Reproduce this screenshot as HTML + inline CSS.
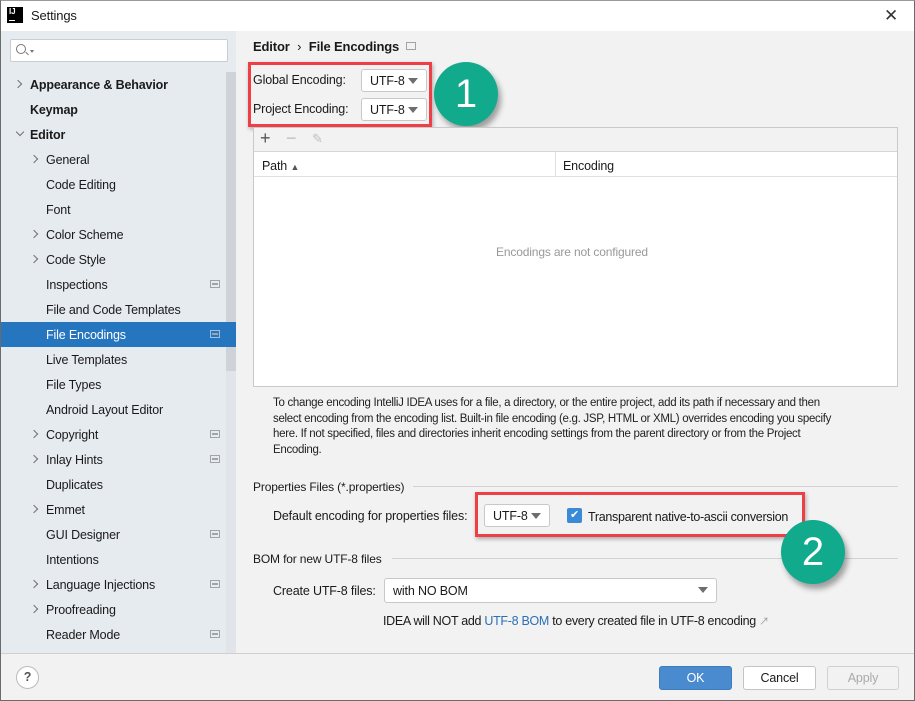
<!DOCTYPE html><html><head><style>
*{margin:0;padding:0;box-sizing:border-box}
body{width:915px;height:701px;overflow:hidden;background:#f2f2f2;font-family:"Liberation Sans","Noto Sans CJK KR",sans-serif;font-size:12.5px;letter-spacing:-0.15px;color:#1a1a1a;position:relative}
.a{position:absolute;white-space:nowrap}
.frame{position:absolute;left:0;top:0;width:915px;height:701px;border:1px solid #6b6b6b;border-top:1px solid #9a9a9a;pointer-events:none}
.title{left:0;top:0;width:915px;height:31px;background:#fff}
.side{left:1px;top:31px;width:235px;height:622px;background:#e6ebf0}
.it{position:absolute;left:0;width:225px;height:25px;line-height:26px}
.arr{position:absolute;top:9px;width:6px;height:6px;border-right:1.3px solid #707070;border-bottom:1.3px solid #707070;transform:rotate(-45deg)}
.arrd{transform:rotate(45deg);top:7px}
.ic{position:absolute;left:209px;top:8px;width:10px;height:8px;border:1px solid #a0a4a8}
.ic:after{content:"";position:absolute;left:1px;top:2px;width:6px;height:2px;background:#a0a4a8}
.dd{position:absolute;background:#fff;border:1px solid #c8c8c8;border-radius:3px;height:23px;line-height:22px;padding-left:8px}
.dd:after{content:"";position:absolute;right:8px;top:8px;border-left:5px solid transparent;border-right:5px solid transparent;border-top:6px solid #6e6e6e}
.circ{position:absolute;width:64px;height:64px;border-radius:50%;background:#12aa8c;color:#fff;font-size:40px;text-align:center;line-height:64px;box-shadow:3px 5px 6px rgba(0,0,0,.35);letter-spacing:0}
.red{position:absolute;border:3px solid #ee3f46;box-shadow:1px 2px 4px rgba(0,0,0,.3)}
.btn{position:absolute;height:24px;border:1px solid #c4c4c4;border-radius:3px;background:#fff;text-align:center;line-height:22px}
</style></head><body>
<div class="a title"></div>
<div class="a" style="left:7px;top:7px;width:16px;height:16px;background:#000;color:#fff;font-size:8px;font-weight:bold;line-height:10px;padding-left:2px">IJ<div style="position:absolute;left:2px;bottom:2px;width:6px;height:1.5px;background:#fff"></div></div>
<div class="a" style="left:31px;top:8px;font-size:13px">Settings</div>
<div class="a" style="left:884px;top:6px;font-size:17px;color:#333">✕</div>

<div class="a side">
 <div class="a" style="left:9px;top:8px;width:218px;height:23px;background:#fff;border:1px solid #c9ccd0;border-radius:2px"><div style="position:absolute;left:5px;top:4px;width:10px;height:10px;border:1.3px solid #777;border-radius:50%"></div><div style="position:absolute;left:14px;top:13px;width:4px;height:1.3px;background:#777;transform:rotate(45deg)"></div><div style="position:absolute;left:19px;top:10px;border-left:2.5px solid transparent;border-right:2.5px solid transparent;border-top:3px solid #777"></div></div>
 <div class="a" style="left:225px;top:41px;width:10px;height:581px;background:#e1e5ea"></div>
 <div class="a" style="left:225px;top:41px;width:10px;height:299px;background:#cfd3d8"></div>
 <div class="a" style="left:0;top:41px;width:225px">
  <div class="it" style="top:0;font-weight:bold;padding-left:29px"><span class="arr" style="left:14px"></span>Appearance &amp; Behavior</div>
  <div class="it" style="top:25px;font-weight:bold;padding-left:29px">Keymap</div>
  <div class="it" style="top:50px;font-weight:bold;padding-left:29px"><span class="arr arrd" style="left:16px"></span>Editor</div>
  <div class="it" style="top:75px;padding-left:45px"><span class="arr" style="left:30px"></span>General</div>
  <div class="it" style="top:100px;padding-left:45px">Code Editing</div>
  <div class="it" style="top:125px;padding-left:45px">Font</div>
  <div class="it" style="top:150px;padding-left:45px"><span class="arr" style="left:30px"></span>Color Scheme</div>
  <div class="it" style="top:175px;padding-left:45px"><span class="arr" style="left:30px"></span>Code Style</div>
  <div class="it" style="top:200px;padding-left:45px">Inspections<span class="ic"></span></div>
  <div class="it" style="top:225px;padding-left:45px">File and Code Templates</div>
  <div class="it" style="top:250px;padding-left:45px;background:#2675bf;color:#fff;width:235px">File Encodings<span class="ic" style="border-color:#9fbde0"></span></div>
  <div class="it" style="top:275px;padding-left:45px">Live Templates</div>
  <div class="it" style="top:300px;padding-left:45px">File Types</div>
  <div class="it" style="top:325px;padding-left:45px">Android Layout Editor</div>
  <div class="it" style="top:350px;padding-left:45px"><span class="arr" style="left:30px"></span>Copyright<span class="ic"></span></div>
  <div class="it" style="top:375px;padding-left:45px"><span class="arr" style="left:30px"></span>Inlay Hints<span class="ic"></span></div>
  <div class="it" style="top:400px;padding-left:45px">Duplicates</div>
  <div class="it" style="top:425px;padding-left:45px"><span class="arr" style="left:30px"></span>Emmet</div>
  <div class="it" style="top:450px;padding-left:45px">GUI Designer<span class="ic"></span></div>
  <div class="it" style="top:475px;padding-left:45px">Intentions</div>
  <div class="it" style="top:500px;padding-left:45px"><span class="arr" style="left:30px"></span>Language Injections<span class="ic"></span></div>
  <div class="it" style="top:525px;padding-left:45px"><span class="arr" style="left:30px"></span>Proofreading</div>
  <div class="it" style="top:550px;padding-left:45px">Reader Mode<span class="ic"></span></div>
 </div>
</div>

<div class="a" style="left:253px;top:39px;font-weight:bold;font-size:13px">Editor <span style="font-weight:normal;margin:0 4px">›</span> File Encodings</div>
<div class="a" style="left:406px;top:42px;width:10px;height:8px;border:1px solid #a0a4a8"></div>

<div class="a" style="left:253px;top:73px">Global Encoding:</div>
<div class="dd" style="left:361px;top:69px;width:66px">UTF-8</div>
<div class="a" style="left:253px;top:102px">Project Encoding:</div>
<div class="dd" style="left:361px;top:98px;width:66px">UTF-8</div>
<div class="red" style="left:248px;top:62px;width:184px;height:65px"></div>
<div class="circ" style="left:434px;top:62px">1</div>

<div class="a" style="left:253px;top:127px;width:645px;height:260px;border:1px solid #c9c9c9;background:#fff"></div>
<div class="a" style="left:254px;top:128px;width:643px;height:24px;background:#f2f2f2;border-bottom:1px solid #d6d6d6"></div>
<div class="a" style="left:260px;top:128px;font-size:18px;color:#555">+</div>
<div class="a" style="left:286px;top:128px;font-size:18px;color:#bbb">−</div>
<div class="a" style="left:312px;top:131px;font-size:13px;color:#c0c0c0">✎</div>
<div class="a" style="left:254px;top:152px;width:643px;height:25px;border-bottom:1px solid #e0e0e0"></div>
<div class="a" style="left:555px;top:152px;width:1px;height:25px;background:#e0e0e0"></div>
<div class="a" style="left:262px;top:159px">Path <span style="font-size:9px;color:#555">▲</span></div>
<div class="a" style="left:563px;top:159px">Encoding</div>
<div class="a" style="left:496px;top:245px;color:#999;font-size:12px">Encodings are not configured</div>

<div class="a" style="left:273px;top:396px;font-size:11.5px;line-height:15.5px;letter-spacing:-0.3px;color:#222">To change encoding IntelliJ IDEA uses for a file, a directory, or the entire project, add its path if necessary and then<br>select encoding from the encoding list. Built-in file encoding (e.g. JSP, HTML or XML) overrides encoding you specify<br>here. If not specified, files and directories inherit encoding settings from the parent directory or from the Project<br>Encoding.</div>

<div class="a" style="left:253px;top:480px;font-size:12px">Properties Files (*.properties)</div>
<div class="a" style="left:413px;top:486px;width:485px;height:1px;background:#d2d2d2"></div>
<div class="a" style="left:273px;top:509px">Default encoding for properties files:</div>
<div class="dd" style="left:484px;top:504px;width:66px">UTF-8</div>
<div class="a" style="left:567px;top:508px;width:15px;height:15px;background:#3b8ad8;border-radius:2px;color:#fff;font-size:11px;text-align:center;line-height:15px">✔</div>
<div class="a" style="left:588px;top:510px;letter-spacing:-0.3px">Transparent native-to-ascii conversion</div>
<div class="red" style="left:475px;top:492px;width:330px;height:45px"></div>

<div class="a" style="left:253px;top:552px;font-size:12px">BOM for new UTF-8 files</div>
<div class="a" style="left:392px;top:558px;width:506px;height:1px;background:#d2d2d2"></div>
<div class="circ" style="left:781px;top:520px">2</div>
<div class="a" style="left:273px;top:584px">Create UTF-8 files:</div>
<div class="dd" style="left:384px;top:578px;width:333px;height:25px;line-height:24px">with NO BOM</div>
<div class="a" style="left:383px;top:613px;letter-spacing:-0.3px">IDEA will NOT add <span style="color:#2b6fb5">UTF-8 BOM</span> to every created file in UTF-8 encoding <span style="color:#999;font-size:10px">↗</span></div>

<div class="a" style="left:1px;top:653px;width:913px;height:1px;background:#d0d0d0"></div>
<div class="a" style="left:16px;top:666px;width:23px;height:23px;border:1px solid #bbb;border-radius:50%;background:#fff;text-align:center;line-height:21px;font-weight:bold;color:#555">?</div>
<div class="btn" style="left:659px;top:666px;width:73px;background:#4a8bd0;border-color:#3f7cbd;color:#fff">OK</div>
<div class="btn" style="left:743px;top:666px;width:73px">Cancel</div>
<div class="btn" style="left:827px;top:666px;width:72px;background:#f2f2f2;color:#aaa;border-color:#d0d0d0">Apply</div>
<div class="frame"></div>
</body></html>
